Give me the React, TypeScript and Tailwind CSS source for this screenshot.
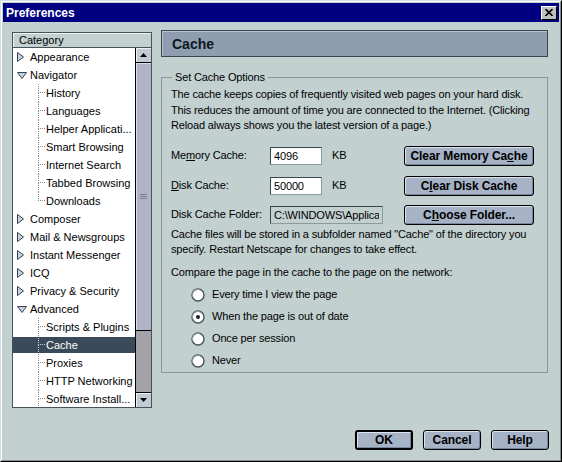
import React from "react";

type TreeItem = {
  label: string;
  depth: 0 | 1;
  open?: boolean;
  last?: boolean;
  selected?: boolean;
};

const items: TreeItem[] = [
  { label: "Appearance", depth: 0 },
  { label: "Navigator", depth: 0, open: true },
  { label: "History", depth: 1 },
  { label: "Languages", depth: 1 },
  { label: "Helper Applicati...", depth: 1 },
  { label: "Smart Browsing", depth: 1 },
  { label: "Internet Search", depth: 1 },
  { label: "Tabbed Browsing", depth: 1 },
  { label: "Downloads", depth: 1, last: true },
  { label: "Composer", depth: 0 },
  { label: "Mail & Newsgroups", depth: 0 },
  { label: "Instant Messenger", depth: 0 },
  { label: "ICQ", depth: 0 },
  { label: "Privacy & Security", depth: 0 },
  { label: "Advanced", depth: 0, open: true },
  { label: "Scripts & Plugins", depth: 1 },
  { label: "Cache", depth: 1, selected: true },
  { label: "Proxies", depth: 1 },
  { label: "HTTP Networking", depth: 1 },
  { label: "Software Install...", depth: 1 },
];

const Twisty = ({ open }: { open?: boolean }) =>
  open ? (
    <svg width="10" height="7" viewBox="0 0 10 7">
      <path d="M0.5 0.5H9.5L5 6.5Z" fill="#c6d2de" stroke="#34424f" />
    </svg>
  ) : (
    <svg width="7" height="10" viewBox="0 0 7 10">
      <path d="M0.5 0.5L6.5 5L0.5 9.5Z" fill="#c6d2de" stroke="#34424f" />
    </svg>
  );

function TreeRow({ item }: { item: TreeItem }) {
  const sel = item.selected;
  const dot = sel ? "border-[#c8d0d8]" : "border-[#8a8a8a]";
  return (
    <div
      className={`h-[18px] py-[1px] bg-clip-content flex items-center ${
        sel ? "bg-[#3b4a5a] text-white" : "text-black"
      }`}
    >
      {item.depth === 0 ? (
        <div className="w-[16px] pl-[4px] flex items-center">
          <Twisty open={item.open} />
        </div>
      ) : (
        <div className="ml-[25px] w-[7px] -my-[1px] self-stretch flex flex-col">
          <div className={`h-[9px] border-l border-b border-dotted ${dot}`} />
          <div className={`flex-1 ${item.last ? "" : `border-l border-dotted ${dot}`}`} />
        </div>
      )}
      <span className="ml-[1px] text-[11px] leading-none whitespace-nowrap">{item.label}</span>
    </div>
  );
}

const Btn = ({
  children,
  className = "",
  isDefault,
}: {
  children: React.ReactNode;
  className?: string;
  isDefault?: boolean;
}) => (
  <button
    className={`h-[20px] shrink-0 rounded-[3px] bg-[#a6b2c5] ${
      isDefault ? "border-2" : "border"
    } border-black text-[12px] font-bold text-black leading-none tracking-[-0.1px] shadow-[inset_1px_1px_0_#dce3ec,inset_-1px_-1px_0_#7a8699] ${className}`}
  >
    {children}
  </button>
);

const Radio = ({ checked, label }: { checked?: boolean; label: string }) => (
  <div className="h-[22px] flex items-center pl-[20px]">
    <svg width="14" height="14" viewBox="0 0 14 14">
      <circle cx="7" cy="7" r="6" fill="#fff" stroke="#46525c" strokeWidth="1.4" />
      <path d="M3 10.5A5 5 0 0 1 10.5 3" fill="none" stroke="#9aa6ae" strokeWidth="1" />
      {checked && <circle cx="7" cy="7" r="2" fill="#1c2228" />}
    </svg>
    <span className="ml-[7px]">{label}</span>
  </div>
);

const fieldCls =
  "h-[18px] shrink-0 border border-t-[#3c464e] border-l-[#3c464e] border-r-[#8c9a9a] border-b-[#8c9a9a] px-[3px] text-[11px] text-black outline-none";

export default function App() {
  return (
    <div className="w-[562px] h-[462px] font-['Liberation_Sans',Arial,sans-serif] text-[11px] text-black border border-t-[#d6e0e0] border-l-[#d6e0e0] border-r-black border-b-black">
      <div className="h-full flex flex-col bg-[#c2d0d0] p-[1px] border border-t-white border-l-white border-r-[#7e8c8c] border-b-[#7e8c8c]">
        {/* Title bar */}
        <div className="h-[19px] shrink-0 bg-[#000080] flex items-center justify-between pl-[3px] pr-[2px]">
          <span className="text-[12px] font-bold text-white leading-none">Preferences</span>
          <div className="w-[16px] h-[14px] bg-[#c0c0c0] border border-t-white border-l-white border-r-black border-b-black flex items-center justify-center">
            <svg width="8" height="7" viewBox="0 0 8 7">
              <path d="M0.5 0L7.5 7M7.5 0L0.5 7" stroke="#000" strokeWidth="1.6" />
            </svg>
          </div>
        </div>

        {/* Body */}
        <div className="flex-1 flex flex-col pt-[8px] pl-[9px] pr-[10px]">
          <div className="flex items-start">
            {/* Category tree */}
            <div className="mt-[2px] w-[140px] h-[376px] flex flex-col border border-[#46545a]">
              <div className="h-[15px] shrink-0 border-b border-[#46545a] shadow-[inset_1px_1px_0_#eef4f4] flex items-center pl-[6px] text-[11px] leading-none">
                Category
              </div>
              <div className="flex-1 flex min-h-0">
                <div className="flex-1 bg-white overflow-hidden">
                  {items.map((it) => (
                    <TreeRow key={it.label} item={it} />
                  ))}
                </div>
                <div className="w-[16px] flex flex-col border-l border-black bg-[#a2a2a8]">
                  <div className="h-[15px] shrink-0 bg-[#c2cad4] border-b border-black shadow-[inset_1px_1px_0_#eef2f6] flex items-center justify-center">
                    <svg width="7" height="4" viewBox="0 0 7 4">
                      <path d="M3.5 0L7 4H0Z" fill="#000" />
                    </svg>
                  </div>
                  <div className="h-[268px] shrink-0 bg-[#b2b2c6] border-b border-black shadow-[inset_1px_1px_0_#dcdcea] flex items-center justify-center">
                    <svg width="7" height="5" viewBox="0 0 7 5">
                      <path d="M0 0.5H7M0 2.5H7M0 4.5H7" stroke="#7e7e94" />
                    </svg>
                  </div>
                  <div className="flex-1" />
                  <div className="h-[15px] shrink-0 bg-[#c2cad4] border-t border-black shadow-[inset_1px_1px_0_#eef2f6] flex items-center justify-center">
                    <svg width="7" height="4" viewBox="0 0 7 4">
                      <path d="M0 0H7L3.5 4Z" fill="#000" />
                    </svg>
                  </div>
                </div>
              </div>
            </div>

            {/* Right panel */}
            <div className="ml-[9px] w-[387px] flex flex-col">
              <div className="h-[27px] bg-[#8e9eb0] border border-[#38444f] shadow-[inset_1px_1px_0_#b6c2ce] flex items-center pl-[10px]">
                <span className="text-[14px] font-bold text-[#0e161e] leading-none">Cache</span>
              </div>

              <fieldset className="mt-[13px] w-[387px] min-w-0 h-[303px] overflow-hidden border border-[#8a9898] pl-[9px] pr-[10px] tracking-[-0.15px]">
                <legend className="ml-[1px] px-[3px] text-[11px] leading-[14px]">Set Cache Options</legend>

                <p className="mt-[3px] leading-[15.5px] whitespace-nowrap">
                  The cache keeps copies of frequently visited web pages on your hard disk.
                  <br />
                  This reduces the amount of time you are connected to the Internet. (Clicking
                  <br />
                  Reload always shows you the latest version of a page.)
                </p>

                <div className="mt-[12px] h-[20px] flex items-center">
                  <span className="w-[99px] shrink-0">
                    Me<span className="underline">m</span>ory Cache:
                  </span>
                  <input readOnly value="4096" className={`${fieldCls} w-[52px] bg-white`} />
                  <span className="ml-[10px] w-[72px] shrink-0">KB</span>
                  <Btn className="w-[130px]">
                    Clear Memory Ca<span className="underline">c</span>he
                  </Btn>
                </div>

                <div className="mt-[10px] h-[20px] flex items-center">
                  <span className="w-[99px] shrink-0">
                    <span className="underline">D</span>isk Cache:
                  </span>
                  <input readOnly value="50000" className={`${fieldCls} w-[52px] bg-white`} />
                  <span className="ml-[10px] w-[72px] shrink-0">KB</span>
                  <Btn className="w-[130px]">
                    C<span className="underline">l</span>ear Disk Cache
                  </Btn>
                </div>

                <div className="mt-[9px] h-[20px] flex items-center">
                  <span className="w-[99px] shrink-0">Disk Cache Folder:</span>
                  <input
                    readOnly
                    value={"C:\\WINDOWS\\Application Data\\Mozilla\\Profiles"}
                    className={`${fieldCls} w-[113px] bg-[#c2d0d0]`}
                  />
                  <div className="w-[21px] shrink-0" />
                  <Btn className="w-[130px]">
                    C<span className="underline">h</span>oose Folder...
                  </Btn>
                </div>

                <p className="mt-[2px] leading-[15px] whitespace-nowrap">
                  Cache files will be stored in a subfolder named &quot;Cache&quot; of the directory you
                  <br />
                  specify. Restart Netscape for changes to take effect.
                </p>

                <p className="mt-[8px] leading-[15px]">
                  Compare the page in the cache to the page on the network:
                </p>

                <div className="mt-[4px] flex flex-col">
                  <Radio label="Every time I view the page" />
                  <Radio label="When the page is out of date" checked />
                  <Radio label="Once per session" />
                  <Radio label="Never" />
                </div>
              </fieldset>
            </div>
          </div>

          {/* Dialog buttons */}
          <div className="mt-[22px] flex justify-end gap-[10px]">
            <Btn isDefault className="w-[58px]">OK</Btn>
            <Btn className="w-[58px]">Cancel</Btn>
            <Btn className="w-[58px]">Help</Btn>
          </div>
        </div>
      </div>
    </div>
  );
}
